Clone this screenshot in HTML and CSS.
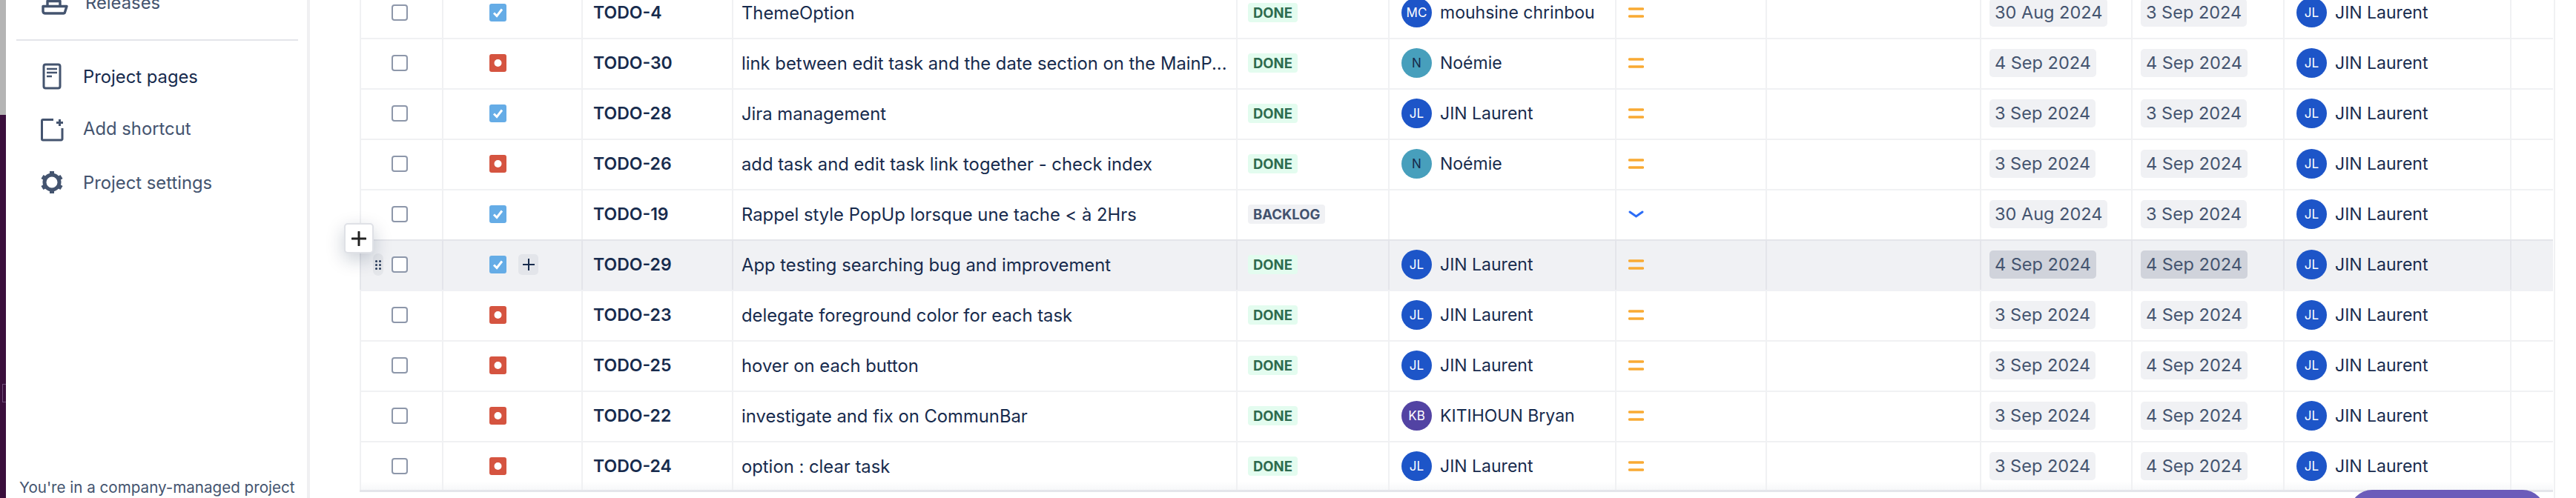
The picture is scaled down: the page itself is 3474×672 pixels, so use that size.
FILE: index.html
```html
<!DOCTYPE html>
<html lang="en">
<head>
  <meta charset="UTF-8">
  <title>TODO - List</title>
  <link rel="stylesheet" href="styles.css">
</head>
<body>

<svg class="sprite" width="0" height="0">
  <symbol id="i-task" viewBox="0 0 23 24">
    <rect width="23" height="24" rx="3" fill="#65ace6"/>
    <path d="M6 12.5l4 4 7-9" fill="none" stroke="#fff" stroke-width="3"/>
  </symbol>
  <symbol id="i-bug" viewBox="0 0 23 24">
    <rect width="23" height="24" rx="3" fill="#d55440"/>
    <circle cx="11.5" cy="12" r="5" fill="#fff"/>
  </symbol>
  <symbol id="i-medium" viewBox="0 0 21 14">
    <path d="M1.5 2h18M1.5 12h18" fill="none" stroke="#f9aa33" stroke-width="3.400" stroke-linecap="round"/>
  </symbol>
  <symbol id="i-low" viewBox="0 0 21 14">
    <path d="M2 4l8.500 6L19 4" fill="none" stroke="#2b6cf6" stroke-width="3" stroke-linecap="round"/>
  </symbol>
</svg>

<div class="app">
  <div class="desktop-edge">
    <span class="edge-mark"></span>
  </div>

  <aside class="sidebar">
    <a class="nav-item nav-releases">
      <svg class="nav-icon" viewBox="0 0 34 34" width="34" height="34">
        <path d="M5 22.500H37l-2.500 8a2 2 0 0 1-2 1.500H8a3 3 0 0 1-3-2.500zM11 22V15.500H28V22M15 15V9H24V15" fill="none" stroke="#44546f" stroke-width="3.400" stroke-linejoin="round"/>
      </svg>
      Releases
    </a>
    <div class="nav-divider"></div>
    <a class="nav-item nav-current">
      <svg class="nav-icon" viewBox="0 0 34 34" width="34" height="34">
        <rect x="6" y="1" width="22" height="32" rx="2.500" fill="none" stroke="#44546f" stroke-width="3"/>
        <path d="M10 7h14M10 12h14M10 17h7" fill="none" stroke="#44546f" stroke-width="2.600"/>
      </svg>
      Project pages
    </a>
    <a class="nav-item">
      <svg class="nav-icon" viewBox="0 0 34 34" width="34" height="34">
        <path d="M19 5.500H5a1.500 1.500 0 0 0-1.500 1.500v24.500a1.500 1.500 0 0 0 1.500 1.500h24.500a1.500 1.500 0 0 0 1.500-1.500V17" fill="none" stroke="#44546f" stroke-width="3"/>
        <path d="M27.500 5v9M23 9.500h9" fill="none" stroke="#44546f" stroke-width="3"/>
      </svg>
      Add shortcut
    </a>
    <a class="nav-item nav-settings">
      <svg class="nav-icon" viewBox="0 0 34 34" width="34" height="34">
        <circle cx="17" cy="17" r="10" fill="none" stroke="#44546f" stroke-width="5"/>
        <path d="M17 2v6M17 26v6M4 9.500l5 3M25 21.500l5 3M4 24.500l5-3M25 12.500l5-3" fill="none" stroke="#44546f" stroke-width="6"/>
      </svg>
      Project settings
    </a>
    <p class="sidebar-note">You're in a company-managed project</p>
  </aside>

  <main class="content">
    <div class="table">

      <div class="row">
        <div class="cell"><span class="check"></span></div>
        <div class="cell cell-type"><svg class="type-icon"><use href="#i-task"/></svg></div>
        <div class="cell cell-key">TODO-4</div>
        <div class="cell cell-summary">ThemeOption</div>
        <div class="cell cell-status"><span class="lozenge done">DONE</span></div>
        <div class="cell cell-person"><span class="avatar blue">MC</span>mouhsine chrinbou</div>
        <div class="cell cell-priority"><svg class="priority"><use href="#i-medium"/></svg></div>
        <div class="cell"></div>
        <div class="cell cell-date"><span class="date">30 Aug 2024</span></div>
        <div class="cell cell-date"><span class="date">3 Sep 2024</span></div>
        <div class="cell cell-person"><span class="avatar blue">JL</span>JIN Laurent</div>
        <div class="cell"></div>
      </div>

      <div class="row">
        <div class="cell"><span class="check"></span></div>
        <div class="cell cell-type"><svg class="type-icon"><use href="#i-bug"/></svg></div>
        <div class="cell cell-key">TODO-30</div>
        <div class="cell cell-summary">link between edit task and the date section on the MainP...</div>
        <div class="cell cell-status"><span class="lozenge done">DONE</span></div>
        <div class="cell cell-person"><span class="avatar teal">N</span>Noémie</div>
        <div class="cell cell-priority"><svg class="priority"><use href="#i-medium"/></svg></div>
        <div class="cell"></div>
        <div class="cell cell-date"><span class="date">4 Sep 2024</span></div>
        <div class="cell cell-date"><span class="date">4 Sep 2024</span></div>
        <div class="cell cell-person"><span class="avatar blue">JL</span>JIN Laurent</div>
        <div class="cell"></div>
      </div>

      <div class="row">
        <div class="cell"><span class="check"></span></div>
        <div class="cell cell-type"><svg class="type-icon"><use href="#i-task"/></svg></div>
        <div class="cell cell-key">TODO-28</div>
        <div class="cell cell-summary">Jira management</div>
        <div class="cell cell-status"><span class="lozenge done">DONE</span></div>
        <div class="cell cell-person"><span class="avatar blue">JL</span>JIN Laurent</div>
        <div class="cell cell-priority"><svg class="priority"><use href="#i-medium"/></svg></div>
        <div class="cell"></div>
        <div class="cell cell-date"><span class="date">3 Sep 2024</span></div>
        <div class="cell cell-date"><span class="date">3 Sep 2024</span></div>
        <div class="cell cell-person"><span class="avatar blue">JL</span>JIN Laurent</div>
        <div class="cell"></div>
      </div>

      <div class="row">
        <div class="cell"><span class="check"></span></div>
        <div class="cell cell-type"><svg class="type-icon"><use href="#i-bug"/></svg></div>
        <div class="cell cell-key">TODO-26</div>
        <div class="cell cell-summary">add task and edit task link together - check index</div>
        <div class="cell cell-status"><span class="lozenge done">DONE</span></div>
        <div class="cell cell-person"><span class="avatar teal">N</span>Noémie</div>
        <div class="cell cell-priority"><svg class="priority"><use href="#i-medium"/></svg></div>
        <div class="cell"></div>
        <div class="cell cell-date"><span class="date">3 Sep 2024</span></div>
        <div class="cell cell-date"><span class="date">4 Sep 2024</span></div>
        <div class="cell cell-person"><span class="avatar blue">JL</span>JIN Laurent</div>
        <div class="cell"></div>
      </div>

      <div class="row before-hover">
        <div class="cell"><span class="check"></span></div>
        <div class="cell cell-type"><svg class="type-icon"><use href="#i-task"/></svg></div>
        <div class="cell cell-key">TODO-19</div>
        <div class="cell cell-summary">Rappel style PopUp lorsque une tache &lt; à 2Hrs</div>
        <div class="cell cell-status"><span class="lozenge backlog">BACKLOG</span></div>
        <div class="cell cell-person"></div>
        <div class="cell cell-priority"><svg class="priority"><use href="#i-low"/></svg></div>
        <div class="cell"></div>
        <div class="cell cell-date"><span class="date">30 Aug 2024</span></div>
        <div class="cell cell-date"><span class="date">3 Sep 2024</span></div>
        <div class="cell cell-person"><span class="avatar blue">JL</span>JIN Laurent</div>
        <div class="cell"></div>
      </div>

      <div class="row is-hover">
        <div class="cell">
          <span class="drag-handle"><i></i><i></i><i></i><i></i><i></i><i></i></span>
          <span class="check"></span>
        </div>
        <div class="cell cell-type">
          <svg class="type-icon"><use href="#i-task"/></svg>
          <span class="subtask-add">
            <svg viewBox="0 0 16 16" width="16" height="16"><path d="M8 0v16M0 8h16" stroke="#172b4d" stroke-width="2"/></svg>
          </span>
        </div>
        <div class="cell cell-key">TODO-29</div>
        <div class="cell cell-summary">App testing searching bug and improvement</div>
        <div class="cell cell-status"><span class="lozenge done">DONE</span></div>
        <div class="cell cell-person"><span class="avatar blue">JL</span>JIN Laurent</div>
        <div class="cell cell-priority"><svg class="priority"><use href="#i-medium"/></svg></div>
        <div class="cell"></div>
        <div class="cell cell-date"><span class="date">4 Sep 2024</span></div>
        <div class="cell cell-date"><span class="date">4 Sep 2024</span></div>
        <div class="cell cell-person"><span class="avatar blue">JL</span>JIN Laurent</div>
        <div class="cell"></div>
        <button class="row-add">
          <svg viewBox="0 0 20 20" width="20" height="20"><path d="M10 1v18M1 10h18" stroke="#222" stroke-width="3" stroke-linecap="round"/></svg>
        </button>
      </div>

      <div class="row">
        <div class="cell"><span class="check"></span></div>
        <div class="cell cell-type"><svg class="type-icon"><use href="#i-bug"/></svg></div>
        <div class="cell cell-key">TODO-23</div>
        <div class="cell cell-summary">delegate foreground color for each task</div>
        <div class="cell cell-status"><span class="lozenge done">DONE</span></div>
        <div class="cell cell-person"><span class="avatar blue">JL</span>JIN Laurent</div>
        <div class="cell cell-priority"><svg class="priority"><use href="#i-medium"/></svg></div>
        <div class="cell"></div>
        <div class="cell cell-date"><span class="date">3 Sep 2024</span></div>
        <div class="cell cell-date"><span class="date">4 Sep 2024</span></div>
        <div class="cell cell-person"><span class="avatar blue">JL</span>JIN Laurent</div>
        <div class="cell"></div>
      </div>

      <div class="row">
        <div class="cell"><span class="check"></span></div>
        <div class="cell cell-type"><svg class="type-icon"><use href="#i-bug"/></svg></div>
        <div class="cell cell-key">TODO-25</div>
        <div class="cell cell-summary">hover on each button</div>
        <div class="cell cell-status"><span class="lozenge done">DONE</span></div>
        <div class="cell cell-person"><span class="avatar blue">JL</span>JIN Laurent</div>
        <div class="cell cell-priority"><svg class="priority"><use href="#i-medium"/></svg></div>
        <div class="cell"></div>
        <div class="cell cell-date"><span class="date">3 Sep 2024</span></div>
        <div class="cell cell-date"><span class="date">4 Sep 2024</span></div>
        <div class="cell cell-person"><span class="avatar blue">JL</span>JIN Laurent</div>
        <div class="cell"></div>
      </div>

      <div class="row">
        <div class="cell"><span class="check"></span></div>
        <div class="cell cell-type"><svg class="type-icon"><use href="#i-bug"/></svg></div>
        <div class="cell cell-key">TODO-22</div>
        <div class="cell cell-summary">investigate and fix on CommunBar</div>
        <div class="cell cell-status"><span class="lozenge done">DONE</span></div>
        <div class="cell cell-person"><span class="avatar purple">KB</span>KITIHOUN Bryan</div>
        <div class="cell cell-priority"><svg class="priority"><use href="#i-medium"/></svg></div>
        <div class="cell"></div>
        <div class="cell cell-date"><span class="date">3 Sep 2024</span></div>
        <div class="cell cell-date"><span class="date">4 Sep 2024</span></div>
        <div class="cell cell-person"><span class="avatar blue">JL</span>JIN Laurent</div>
        <div class="cell"></div>
      </div>

      <div class="row row-last">
        <div class="cell"><span class="check"></span></div>
        <div class="cell cell-type"><svg class="type-icon"><use href="#i-bug"/></svg></div>
        <div class="cell cell-key">TODO-24</div>
        <div class="cell cell-summary">option : clear task</div>
        <div class="cell cell-status"><span class="lozenge done">DONE</span></div>
        <div class="cell cell-person"><span class="avatar blue">JL</span>JIN Laurent</div>
        <div class="cell cell-priority"><svg class="priority"><use href="#i-medium"/></svg></div>
        <div class="cell"></div>
        <div class="cell cell-date"><span class="date">3 Sep 2024</span></div>
        <div class="cell cell-date"><span class="date">4 Sep 2024</span></div>
        <div class="cell cell-person"><span class="avatar blue">JL</span>JIN Laurent</div>
        <div class="cell"></div>
      </div>

    </div>
    <div class="help-button"></div>
  </main>
</div>

</body>
</html>
```

FILE: styles.css
```css
:root {
  --text-color: #172b4d;
  --muted-color: #44546f;
  --line-color: #f0f1f3;
  --hover-line: #e4e5ea;
}

html, body {
  margin: 0;
  height: 100%;
  overflow: hidden;
}

body {
  font-family: Inter, "Liberation Sans", sans-serif;
  font-size: 23px;
  color: var(--text-color);
  background: #fff;
}

.sprite {
  position: absolute;
}

.app {
  display: flex;
  height: 672px;
  overflow: hidden;
}

/* bit of the desktop that shows left of the window */
.desktop-edge {
  position: relative;
  width: 8px;
  flex: none;
  background: linear-gradient(#3a0f3c, #3a0f3c) 0 155px / 100% 100% no-repeat, #b4b4b4;
}
.edge-mark {
  position: absolute;
  top: 518px;
  left: 3px;
  width: 5px;
  height: 25px;
  box-sizing: border-box;
  border: 1px solid #6f4f7a;
  border-right: none;
}

.sidebar {
  width: 406px;
  flex: none;
  display: flex;
  flex-direction: column;
  margin-right: 4px;
  box-shadow: 4px 0 0 #f0f0f2;
  background: #fff;
}
.nav-item {
  display: flex;
  align-items: center;
  gap: 25px;
  height: 70px;
  padding-left: 45px;
  font-size: 23.8px;
  color: var(--muted-color);
}
.nav-icon {
  flex: none;
  overflow: visible;
}
.nav-releases {
  gap: 28px;
  margin-top: -32px;
}
.nav-divider {
  flex: none;
  height: 2px;
  margin: 15px 12px 13px 14px;
  background: #e4e5ea;
}
.nav-current {
  color: var(--text-color);
}
.nav-settings {
  margin-top: 3px;
}
.sidebar-note {
  margin: auto 0 0 18px;
  font-size: 20.6px;
  line-height: 28px;
  white-space: nowrap;
  color: var(--muted-color);
}

.content {
  position: relative;
  flex: 1;
  min-width: 0;
  padding-left: 67px;
  overflow: hidden;
}
.content::after {
  content: "";
  position: absolute;
  top: 0;
  bottom: 0;
  right: 28px;
  width: 2px;
  background: var(--line-color);
}

.table {
  width: 2958px;
  margin-top: -15px;
  border-bottom: 3px solid var(--hover-line);
}
.row {
  position: relative;
  display: grid;
  grid-template-columns: 111px 188px 203px 680px 205px 306px 203px 289px 204px 205px 306px 58px;
  height: 68px;
  box-sizing: border-box;
  border-bottom: 2px solid var(--line-color);
}
.before-hover {
  border-bottom-color: var(--hover-line);
}
.is-hover {
  background: #f0f1f4;
  border-bottom-color: #f0f1f4;
}
.row-last {
  border-bottom: none;
  height: 64px;
  background: linear-gradient(#fff 82%, #f7f8f9);
}

.cell {
  position: relative;
  display: flex;
  align-items: center;
  min-width: 0;
  padding-left: 41px;
  padding-bottom: 2px;
  box-sizing: border-box;
  border-left: 2px solid var(--line-color);
}
.row-last .cell {
  padding-bottom: 0;
}
.is-hover .cell {
  border-left-color: var(--hover-line);
}

.check {
  width: 22px;
  height: 22px;
  box-sizing: border-box;
  border: 2px solid #8d97aa;
  border-radius: 4px;
  background: #fff;
}

.cell-type {
  padding-left: 62px;
  gap: 16px;
}
.type-icon {
  width: 23px;
  height: 24px;
  flex: none;
}
.subtask-add {
  display: flex;
  align-items: center;
  justify-content: center;
  width: 27px;
  height: 28px;
  border-radius: 5px;
  background: #e3e5ea;
}
.drag-handle {
  position: absolute;
  left: 16px;
  top: 17px;
  display: grid;
  grid-template-columns: 3px 3px;
  gap: 2px;
  align-content: center;
  justify-content: center;
  width: 14px;
  height: 30px;
  border-radius: 7px;
  background: #e4e6ea;
}
.drag-handle i {
  width: 3px;
  height: 3px;
  border-radius: 50%;
  background: #253858;
}
.row-add {
  position: absolute;
  left: -21px;
  top: -24px;
  z-index: 2;
  display: flex;
  align-items: center;
  justify-content: center;
  width: 40px;
  height: 41px;
  padding: 0;
  box-sizing: border-box;
  border: 2px solid #dfe1e6;
  border-radius: 5px;
  background: #fff;
  box-shadow: 0 8px 24px rgba(9, 30, 66, 0.22);
}

.cell-key {
  padding-left: 14px;
  font-weight: 600;
}
.cell-summary {
  padding-left: 11px;
  font-size: 23.8px;
  white-space: nowrap;
}
.cell-status {
  padding-left: 14px;
}
.lozenge {
  height: 26px;
  padding: 0 7px;
  border-radius: 4px;
  font-size: 18.5px;
  font-weight: 700;
  line-height: 26px;
}
.done {
  background: #e3fcef;
  color: #2e6b4f;
}
.backlog {
  background: #f0f1f4;
  color: #42526e;
}

.cell-person {
  padding-left: 16px;
  gap: 11px;
  white-space: nowrap;
}
.avatar {
  display: flex;
  align-items: center;
  justify-content: center;
  width: 41px;
  height: 40px;
  flex: none;
  border-radius: 50%;
  font-size: 17px;
  color: #fff;
}
.blue {
  background: #1d55c8;
}
.teal {
  background: #479fbc;
  color: #172b4d;
}
.purple {
  background: #5243a3;
}

.cell-priority {
  padding-left: 16px;
}
.priority {
  width: 21px;
  height: 14px;
}

.cell-date {
  padding-left: 11px;
}
.date {
  padding: 0 7px;
  height: 38px;
  border-radius: 5px;
  font-size: 23.5px;
  line-height: 38px;
  background: #f0f1f4;
  color: var(--muted-color);
  white-space: nowrap;
}
.is-hover .date {
  background: #d0d3db;
}

.help-button {
  position: absolute;
  left: 2751px;
  top: 661px;
  width: 263px;
  height: 60px;
  border-radius: 30px;
  background: #6b5cba;
}
```
